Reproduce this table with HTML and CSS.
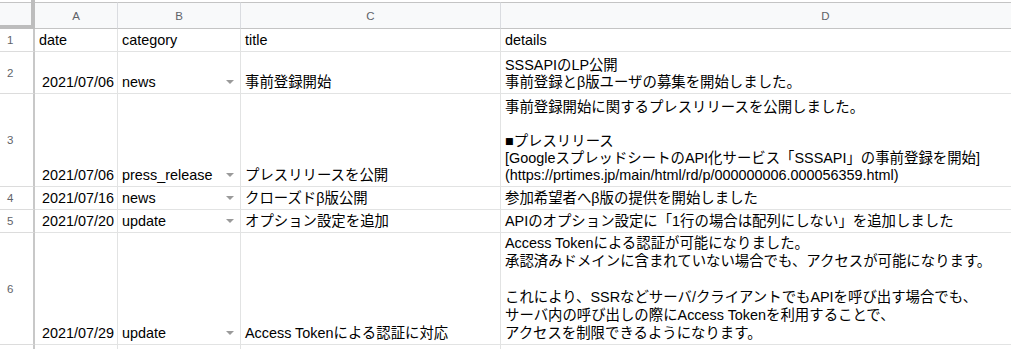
FILE: index.html
```html
<!DOCTYPE html>
<html lang="ja">
<head>
<meta charset="utf-8">
<title>Sheet</title>
<link rel="stylesheet" href="styles.css">
</head>
<body>
<div class="sheet">
  <div class="row head">
    <div class="corner"></div>
    <div class="colh">A</div>
    <div class="colh">B</div>
    <div class="colh">C</div>
    <div class="colh">D</div>
  </div>
  <div class="row r1">
    <div class="rowh">1</div>
    <div class="cell">date</div>
    <div class="cell">category</div>
    <div class="cell">title</div>
    <div class="cell">details</div>
  </div>
  <div class="row r2">
    <div class="rowh">2</div>
    <div class="cell num">2021/07/06</div>
    <div class="cell cat"><span>news</span><i class="arrow"></i></div>
    <div class="cell">事前登録開始</div>
    <div class="cell">SSSAPIのLP公開<br>事前登録とβ版ユーザの募集を開始しました。</div>
  </div>
  <div class="row r3">
    <div class="rowh">3</div>
    <div class="cell num">2021/07/06</div>
    <div class="cell cat"><span>press_release</span><i class="arrow"></i></div>
    <div class="cell">プレスリリースを公開</div>
    <div class="cell">事前登録開始に関するプレスリリースを公開しました。<br><br>■プレスリリース<br>[GoogleスプレッドシートのAPI化サービス「SSSAPI」の事前登録を開始]<br>(https://prtimes.jp/main/html/rd/p/000000006.000056359.html)</div>
  </div>
  <div class="row r4">
    <div class="rowh">4</div>
    <div class="cell num">2021/07/16</div>
    <div class="cell cat"><span>news</span><i class="arrow"></i></div>
    <div class="cell">クローズドβ版公開</div>
    <div class="cell">参加希望者へβ版の提供を開始しました</div>
  </div>
  <div class="row r5">
    <div class="rowh">5</div>
    <div class="cell num">2021/07/20</div>
    <div class="cell cat"><span>update</span><i class="arrow"></i></div>
    <div class="cell">オプション設定を追加</div>
    <div class="cell">APIのオプション設定に「1行の場合は配列にしない」を追加しました</div>
  </div>
  <div class="row r6">
    <div class="rowh">6</div>
    <div class="cell num">2021/07/29</div>
    <div class="cell cat"><span>update</span><i class="arrow"></i></div>
    <div class="cell">Access Tokenによる認証に対応</div>
    <div class="cell">Access Tokenによる認証が可能になりました。<br>承認済みドメインに含まれていない場合でも、アクセスが可能になります。<br><br>これにより、SSRなどサーバ/クライアントでもAPIを呼び出す場合でも、<br>サーバ内の呼び出しの際にAccess Tokenを利用することで、<br>アクセスを制限できるようになります。</div>
  </div>
  <div class="row r7">
    <div class="rowh"></div>
    <div class="cell"></div>
    <div class="cell"></div>
    <div class="cell"></div>
    <div class="cell"></div>
  </div>
</div>
</body>
</html>
```

FILE: styles.css
```css
html, body {
  margin: 0;
  padding: 0;
  overflow: hidden;
  background: #fff;
}
body {
  font-family: "Liberation Sans", Arial, "Noto Sans CJK JP", sans-serif;
  font-size: 14.4px;
  color: #000;
}
.sheet {
  width: 1151px;
}
.row {
  display: grid;
  grid-template-columns: 35px 83px 123px 260px 650px;
}
.row > div {
  box-sizing: border-box;
}
.head {
  height: 29px;
}
.corner {
  background: linear-gradient(#fff 0 2px, #c4c4c4 2px 3px, #f8f9fa 3px);
  border-right: 4px solid #bdbdbd;
  border-bottom: 4px solid #bdbdbd;
}
.colh {
  margin-top: 2px;
  background: #f8f9fa;
  border-top: 1px solid #c4c4c4;
  border-bottom: 1px solid #c4c4c4;
  border-right: 1px solid #dadce0;
  display: flex;
  align-items: center;
  justify-content: center;
  font-size: 11.5px;
  color: #5f6368;
}
.rowh {
  border-right: 2px solid #c8c8c8;
  border-bottom: 1px solid #dcdcdc;
  display: flex;
  align-items: center;
  padding-left: 7px;
  font-size: 11.5px;
  color: #5f6368;
}
.cell {
  border-right: 1px solid #e2e3e3;
  border-bottom: 1px solid #e2e3e3;
  padding: 0 3px 2px 4px;
  line-height: 17px;
  white-space: nowrap;
  display: flex;
  flex-direction: column;
  justify-content: flex-end;
}
.cell.num {
  text-align: right;
  align-items: flex-end;
  padding-right: 3px;
}
.cell.cat {
  flex-direction: row;
  align-items: flex-end;
  justify-content: space-between;
}
.arrow {
  display: block;
  width: 0;
  height: 0;
  border-left: 4px solid transparent;
  border-right: 4px solid transparent;
  border-top: 4px solid #9a9a9a;
  margin: 0 3px 7px 0;
}
.r1 { height: 23px; }
.r2 { height: 42px; }
.r3 { height: 93px; }
.r4 { height: 23px; }
.r5 { height: 23px; }
.r6 { height: 112px; }
.r6 .cell { line-height: 18px; }
.r7 { height: 30px; }
```
